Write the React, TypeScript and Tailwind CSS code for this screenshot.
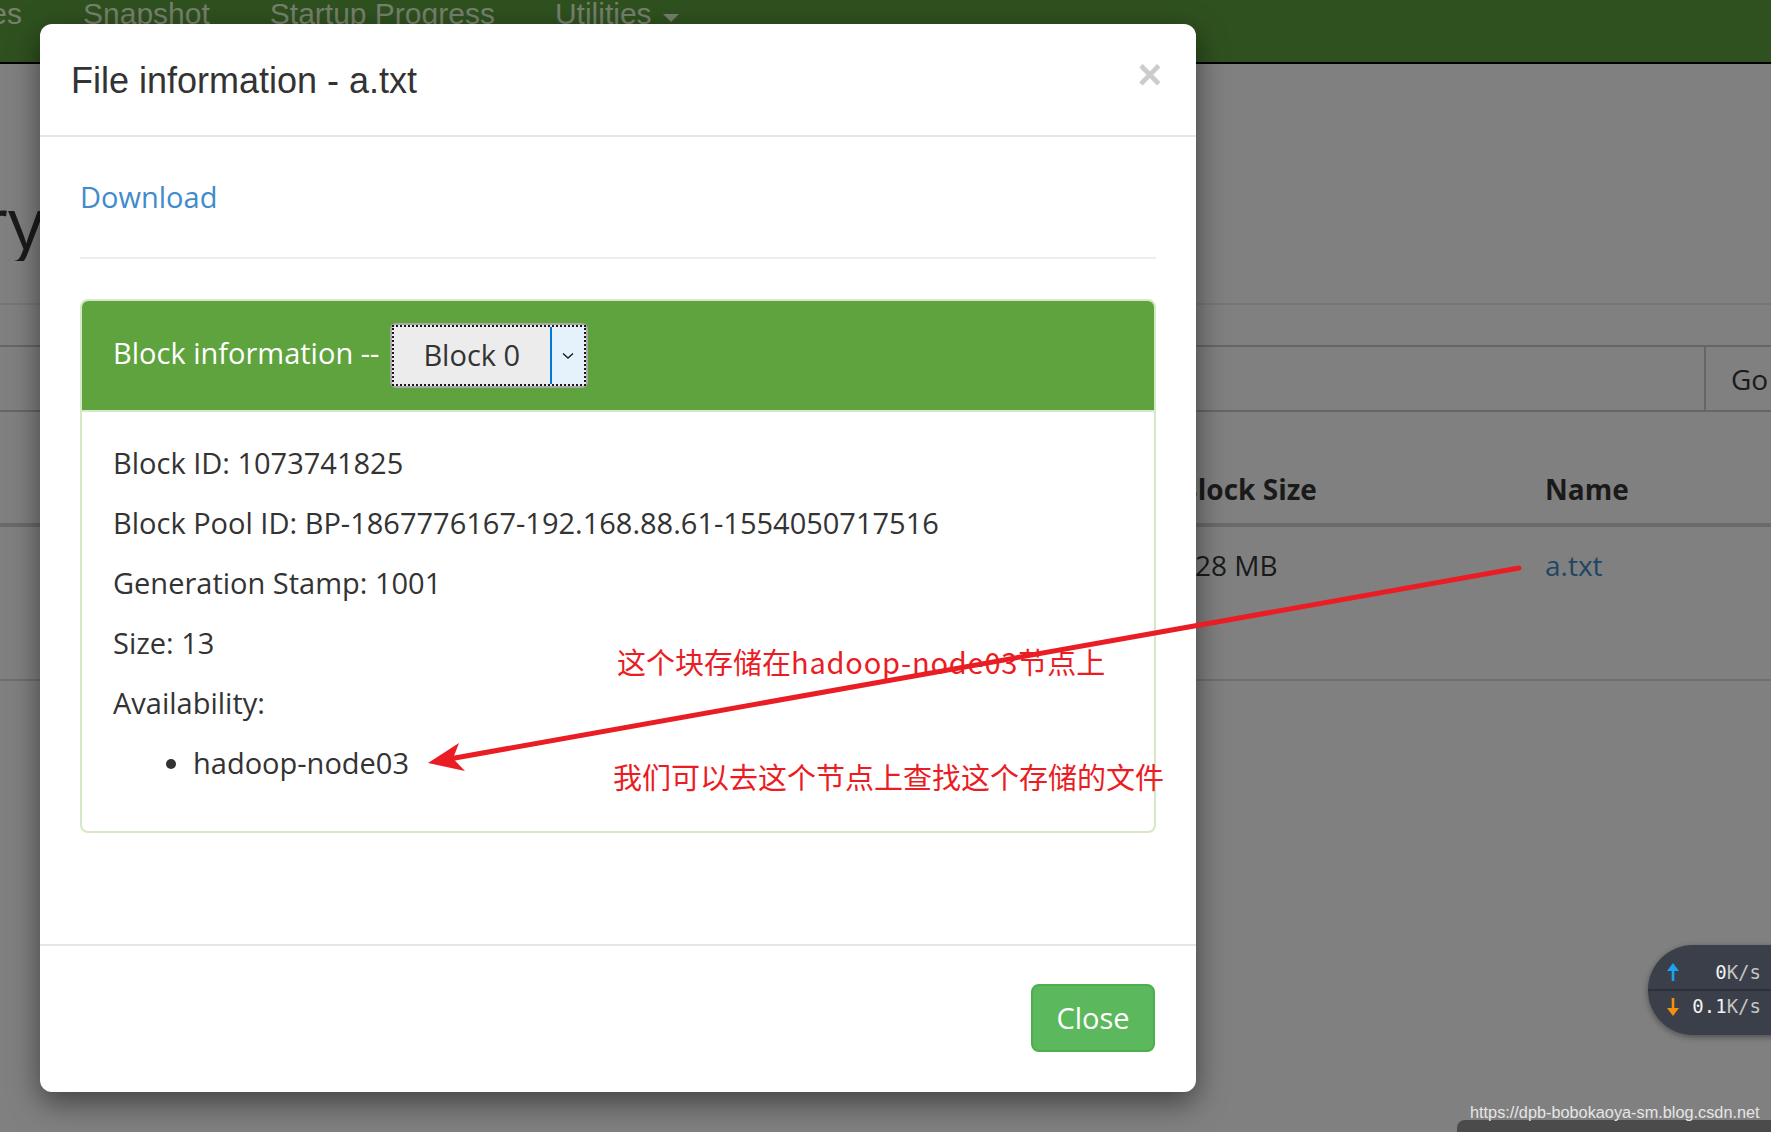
import React from "react";

const rows = [
  "Block ID: 1073741825",
  "Block Pool ID: BP-1867776167-192.168.88.61-1554050717516",
  "Generation Stamp: 1001",
  "Size: 13",
  "Availability:",
];

function BackgroundPage() {
  return (
    <div className="flex flex-col">
      <div className="flex h-[64px] items-start overflow-hidden border-b-2 border-black bg-[#2f511f] font-['Liberation_Sans',Arial,sans-serif] text-[30px] leading-[30px] text-[#76806d]">
        <div className="-mt-[1px] flex w-[22px] justify-end overflow-hidden">
          <span className="whitespace-nowrap">Datanode Volume Failures</span>
        </div>
        <span className="-mt-[1px] ml-[61px] whitespace-nowrap">Snapshot</span>
        <span className="-mt-[1px] ml-[60px] whitespace-nowrap">Startup Progress</span>
        <span className="-mt-[1px] ml-[60px] whitespace-nowrap">Utilities</span>
        <span className="ml-[11px] mt-[14px] h-0 w-0 border-x-[8px] border-t-[8px] border-x-transparent border-t-[#76806d]" />
      </div>

      <div className="h-[239px]">
        <div className="mt-[118px] flex w-[44px] justify-end overflow-hidden">
          <h1 className="whitespace-nowrap text-[72px] leading-[79px] text-[#1a1a1a]">Browse Directory</h1>
        </div>
      </div>
      <div className="border-t-2 border-[#777777]" />
      <div className="mt-[40px] flex h-[67px] border-y-2 border-[#666666]">
        <div className="w-[1706px] border-r-2 border-[#666666]" />
        <div className="flex items-center pl-[25px] text-[28px] leading-[40px] text-[#1a1a1a]">Go</div>
      </div>
      <div className="flex h-[115px] items-end border-b-4 border-[#6a6a6a] pb-[14px] text-[28px] font-bold leading-[40px] text-[#1a1a1a]">
        <div className="w-[1179px]" />
        <div className="w-[366px]">Block Size</div>
        <div>Name</div>
      </div>
      <div className="flex h-[154px] items-start border-b-2 border-[#6f6f6f] pt-[18px] text-[28px] leading-[40px] text-[#1a1a1a]">
        <div className="w-[1179px]" />
        <div className="w-[366px]">128 MB</div>
        <div className="text-[#214565]">a.txt</div>
      </div>
    </div>
  );
}

function FileModal() {
  return (
    <div className="absolute left-[40px] top-[24px] w-[1156px] rounded-[12px] bg-white shadow-[0_10px_30px_rgba(0,0,0,0.5)]">
      <div className="flex items-start justify-between border-b-2 border-[#e5e5e5] pb-[29px] pl-[31px] pr-[34px] pt-[31px]">
        <h4 className="font-['Liberation_Sans',Arial,sans-serif] text-[36px] leading-[51px] text-[#333333]">
          File information - a.txt
        </h4>
        <button className="-mt-[1px] font-['Liberation_Sans',Arial,sans-serif] text-[42px] font-bold leading-none text-[#cccccc]">
          ×
        </button>
      </div>

      <div className="px-[40px] pb-[111px] pt-[40px]">
        <a className="block text-[29px] leading-[40px] text-[#428bca]">Download</a>
        <hr className="mb-[40px] mt-[40px] border-0 border-t-2 border-[#eeeeee]" />

        <div className="overflow-hidden rounded-[8px] border-2 border-[#d6e9c6]">
          <div className="flex h-[111px] items-center border-b-2 border-[#d6e9c6] bg-[#5fa33e] pl-[31px]">
            <span className="mb-[6px] whitespace-nowrap text-[29px] leading-[40px] text-white">Block information --</span>
            <div className="ml-[11px] flex h-[65px] w-[198px] shrink-0 rounded-[6px] border-2 border-[#a8a8a8] bg-[#ececec]">
              <div className="flex flex-1 border-2 border-dotted border-[#1a1a1a]">
                <span className="flex-1 pl-[29px] text-[29px] leading-[55px] text-[#333333]">Block 0</span>
                <span className="flex w-[34px] items-center justify-center border-l-2 border-[#0078d7] bg-[#e5f1fb]">
                  <svg width="12" height="8" viewBox="0 0 12 8">
                    <path d="M1 1.5 L6 6 L11 1.5" fill="none" stroke="#222" strokeWidth="1.5" />
                  </svg>
                </span>
              </div>
            </div>
          </div>
          <div className="px-[31px] pb-[28px] pt-[31px] text-[29px] leading-[40px] text-[#333333]">
            {rows.map((r) => (
              <p key={r} className="mb-[20px]">
                {r}
              </p>
            ))}
            <ul className="mb-[20px] list-disc pl-[80px]">
              <li>hadoop-node03</li>
            </ul>
          </div>
        </div>
      </div>

      <div className="flex justify-end border-t-2 border-[#e5e5e5] pb-[40px] pr-[41px] pt-[38px]">
        <button className="h-[68px] w-[124px] rounded-[8px] border-2 border-[#4cae4c] bg-[#5cb85c] text-[29px] text-white">
          Close
        </button>
      </div>
    </div>
  );
}

function SpeedWidget() {
  return (
    <div className="absolute left-[1648px] top-[945px] flex h-[90px] w-[140px] flex-col rounded-l-[45px] bg-[#3a3f4a] font-['DejaVu_Sans_Mono',monospace] text-[19px] shadow-[0_2px_6px_rgba(0,0,0,0.4)]">
      <div className="flex h-[46px] items-center justify-between border-b-2 border-[#2c3038] pl-[18px] pr-[27px] pt-[10px]">
        <svg width="14" height="20" viewBox="0 0 14 20">
          <path d="M7 1 L13 9 H8.3 V19 H5.7 V9 H1 Z" fill="#1aa3f0" />
        </svg>
        <span className="text-[#f2f2f2]">
          0<span className="text-[#c4c4c4]">K/s</span>
        </span>
      </div>
      <div className="flex flex-1 items-center justify-between pb-[13px] pl-[18px] pr-[27px]">
        <svg width="14" height="20" viewBox="0 0 14 20">
          <path d="M5.7 1 H8.3 V11 H13 L7 19 L1 11 H5.7 Z" fill="#f5900c" />
        </svg>
        <span className="text-[#f2f2f2]">
          0.1<span className="text-[#c4c4c4]">K/s</span>
        </span>
      </div>
    </div>
  );
}

export default function App() {
  return (
    <div className="relative h-[1132px] w-[1771px] overflow-hidden bg-[#808080] font-['Open_Sans','Noto_Sans',sans-serif]">
      <BackgroundPage />
      <FileModal />

      <span className="absolute left-[617px] top-[647px] whitespace-nowrap font-['Noto_Sans_CJK_SC',sans-serif] text-[29px] leading-none text-[#ea1c24]">
        这个块存储在<span className="tracking-[0.8px]">hadoop-node03</span>节点上
      </span>
      <span className="absolute left-[613px] top-[762px] whitespace-nowrap font-['Noto_Sans_CJK_SC',sans-serif] text-[29px] leading-none text-[#ea1c24]">
        我们可以去这个节点上查找这个存储的文件
      </span>

      <svg className="pointer-events-none absolute left-0 top-0" width="1771" height="1132" viewBox="0 0 1771 1132">
        <line x1="1519" y1="568" x2="452" y2="758.5" stroke="#ea1c24" strokeWidth="5" strokeLinecap="round" />
        <path d="M428 763 L459 743 L453 758.6 L465 771 Z" fill="#ea1c24" />
      </svg>

      <SpeedWidget />

      <div className="absolute left-[1457px] top-[1120px] h-[12px] w-[314px] rounded-tl-[8px] bg-[#4b4b4b]" />
      <span className="absolute left-[1470px] top-[1104px] whitespace-nowrap font-['Liberation_Sans',Arial,sans-serif] text-[16.3px] leading-none text-[#e6e6e6]">
        https://dpb-bobokaoya-sm.blog.csdn.net
      </span>
    </div>
  );
}
